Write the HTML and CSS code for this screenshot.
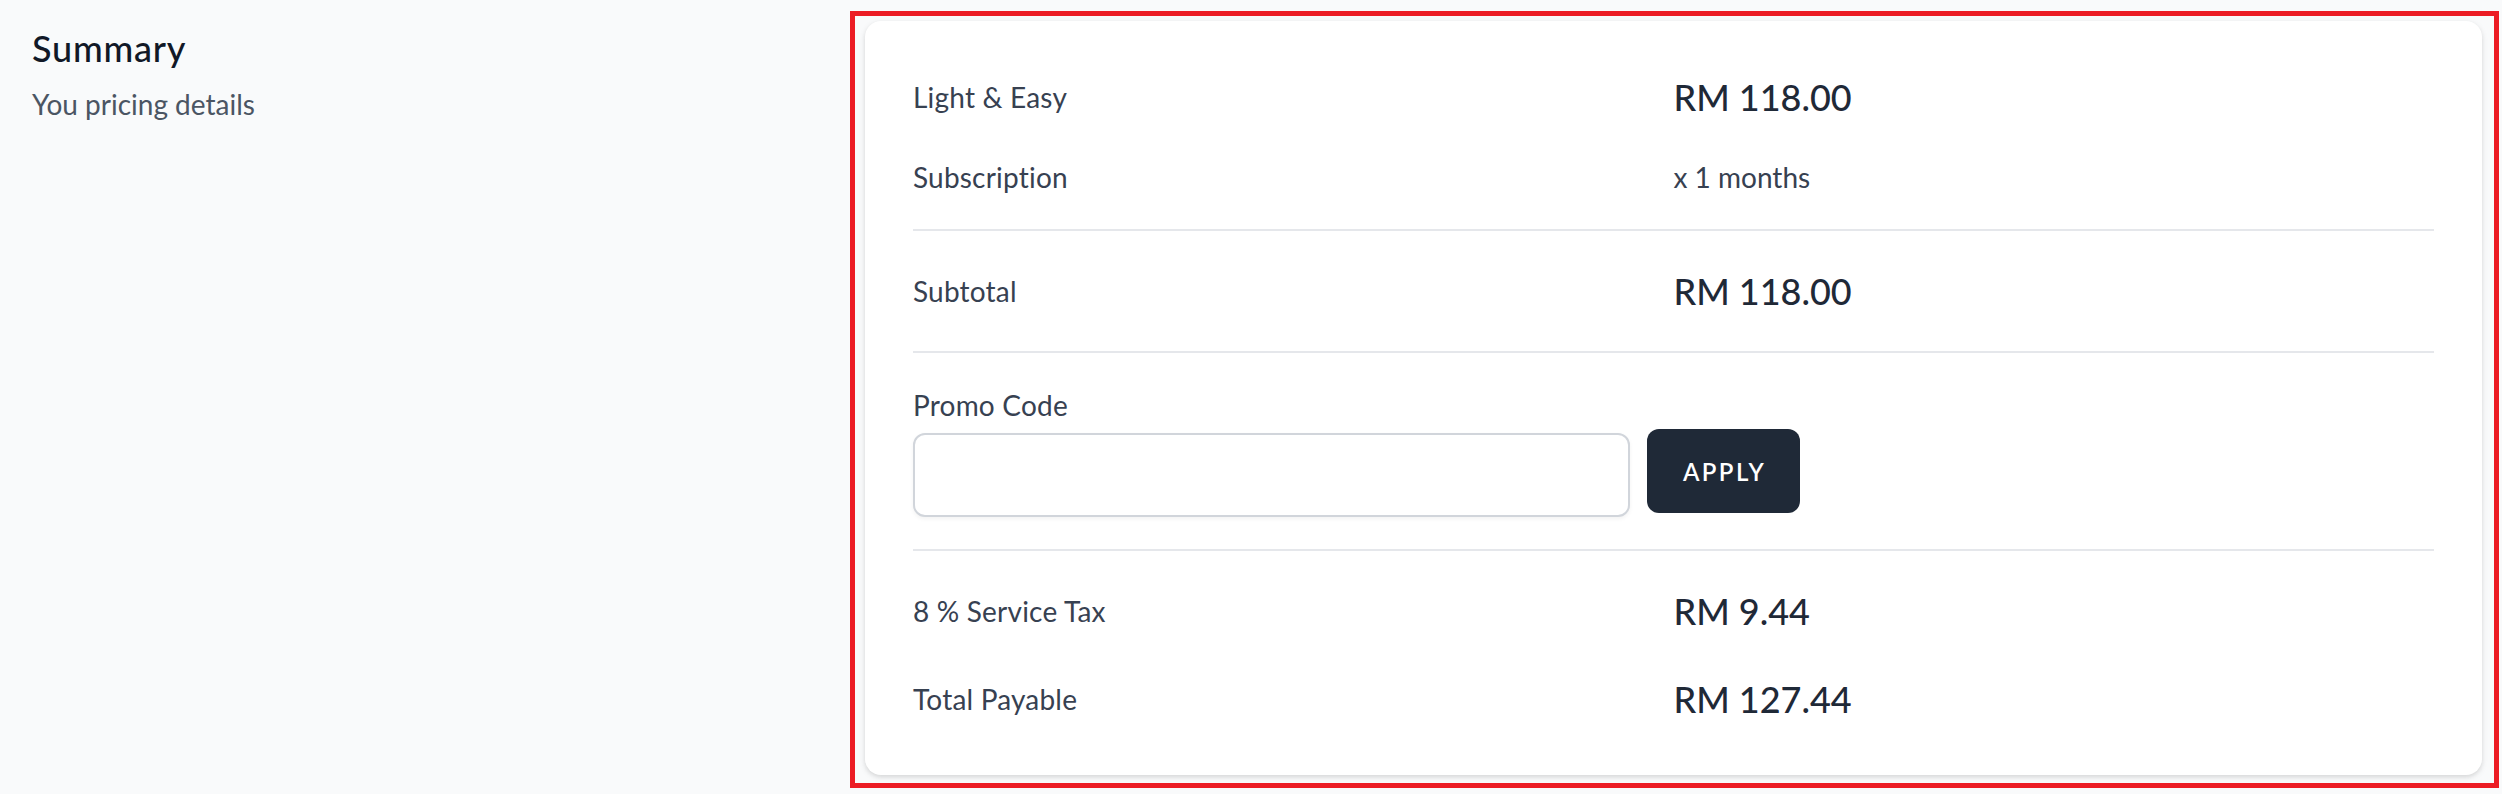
FILE: index.html
```html
<!DOCTYPE html>
<html lang="en">
<head>
<meta charset="utf-8">
<title>Summary</title>
<link rel="stylesheet" href="styles.css">
</head>
<body>
<main class="layout">
  <section class="intro">
    <h3 class="title">Summary</h3>
    <p class="subtitle">You pricing details</p>
  </section>
  <div class="highlight">
    <div class="card">
      <div class="row">
        <span class="label">Light &amp; Easy</span>
        <span class="amount">RM 118.00</span>
      </div>
      <div class="row row-small">
        <span class="label">Subscription</span>
        <span class="note">x 1 months</span>
      </div>
      <hr class="divider">
      <div class="row">
        <span class="label">Subtotal</span>
        <span class="amount">RM 118.00</span>
      </div>
      <hr class="divider">
      <div class="promo">
        <label class="label" for="promo">Promo Code</label>
        <div class="promo-controls">
          <input id="promo" class="input" type="text">
          <button class="btn" type="button">Apply</button>
        </div>
      </div>
      <hr class="divider">
      <div class="row">
        <span class="label">8 % Service Tax</span>
        <span class="amount">RM 9.44</span>
      </div>
      <div class="row">
        <span class="label">Total Payable</span>
        <span class="amount">RM 127.44</span>
      </div>
    </div>
  </div>
</main>
</body>
</html>
```
FILE: styles.css
```css
* { box-sizing: border-box; }
html, body { margin: 0; padding: 0; }
body {
  background: #f9fafb;
  font-family: Lato, "Noto Sans", sans-serif;
  color: #111827;
  height: 794px;
  overflow: hidden;
}
.layout {
  display: flex;
  align-items: flex-start;
  padding: 11px 0 0 32px;
}
.intro {
  width: 785px;
  margin: 9px 33px 0 0;
  flex: none;
}
.title {
  margin: 0;
  font-size: 36px;
  line-height: 56px;
  font-weight: 500;
  letter-spacing: 0.8px;
  color: #111827;
}
.subtitle {
  margin: 8px 0 0;
  font-size: 28px;
  line-height: 40px;
  color: #4b5563;
}
.highlight {
  width: 1649px;
  flex: none;
  border: 5px solid #ec1c24;
  padding: 5px 12px 8px 10px;
}
.card {
  background: #ffffff;
  border-radius: 16px;
  box-shadow: 0 2px 6px rgba(0, 0, 0, 0.1), 0 2px 4px rgba(0, 0, 0, 0.06);
  padding: 48px;
  display: flex;
  flex-direction: column;
  gap: 32px;
}
.row {
  display: grid;
  grid-template-columns: 1fr 1fr;
  align-items: center;
  min-height: 56px;
}
.row-small { min-height: 40px; }
.label {
  font-size: 28px;
  line-height: 40px;
  color: #374151;
  display: block;
  letter-spacing: 0.2px;
}
.note {
  font-size: 28px;
  line-height: 40px;
  color: #374151;
}
.amount {
  font-size: 36px;
  line-height: 56px;
  font-weight: 500;
  color: #1f2937;
}
.divider {
  margin: 0;
  border: 0;
  height: 2px;
  background: #e5e7eb;
}
.promo { display: flex; flex-direction: column; }
.promo-controls {
  display: flex;
  align-items: flex-start;
  gap: 17px;
  height: 92px;
}
.input {
  width: 717px;
  height: 84px;
  margin-top: 8px;
  border: 2px solid #d1d5db;
  border-radius: 12px;
  box-shadow: 0 2px 4px rgba(0, 0, 0, 0.05);
  background: #ffffff;
  font: inherit;
  font-size: 28px;
  padding: 16px 24px;
  outline: none;
}
.btn {
  width: 153px;
  height: 84px;
  margin-top: 4px;
  border: 2px solid transparent;
  border-radius: 12px;
  background: #1f2937;
  color: #ffffff;
  font-family: inherit;
  font-size: 24px;
  font-weight: 600;
  letter-spacing: 0.1em;
  text-transform: uppercase;
  display: flex;
  align-items: center;
  justify-content: center;
  padding: 0 0 0 2px;
  cursor: pointer;
}
```
